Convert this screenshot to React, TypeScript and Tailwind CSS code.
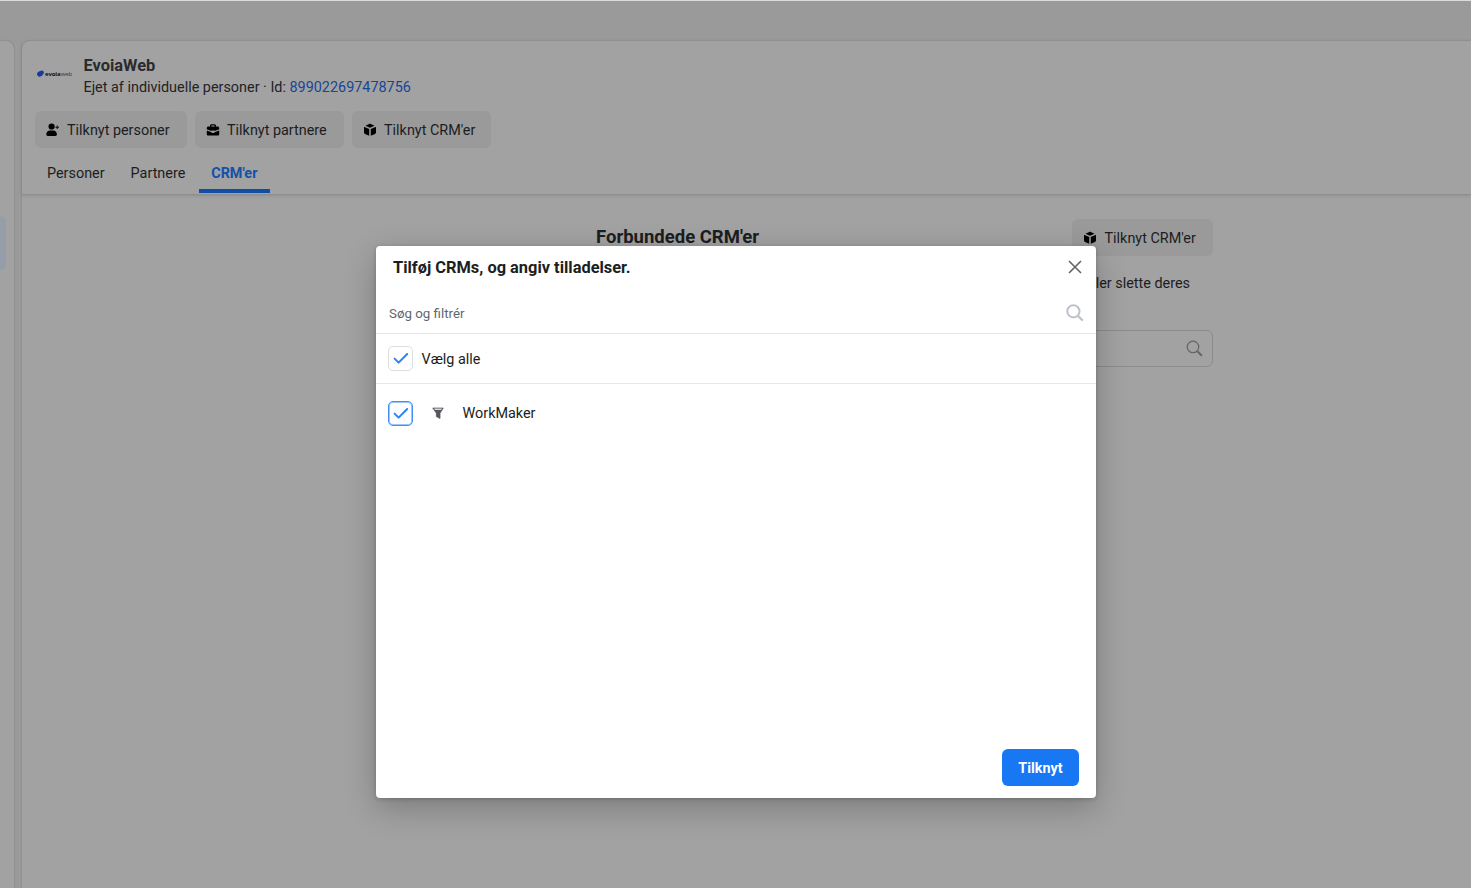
import { ReactNode } from "react";

type IconProps = { className?: string };

function UserPlusIcon() {
  return (
    <svg className="w-[14px] h-[14px]" viewBox="0 0 14 14" fill="currentColor">
      <circle cx="5.6" cy="3.5" r="3.1" />
      <path d="M0.3 11.3C0.3 8.9 2 7.4 4 7.4h3.2c2 0 3.7 1.5 3.7 3.9 0 1-.5 1.6-1.5 1.6H1.8c-1 0-1.5-.6-1.5-1.6z" />
      <path d="M10.6 2.6h1.2v1.1h1.1v1.2h-1.1V6h-1.2V4.9H9.5V3.7h1.1z" opacity=".8" />
    </svg>
  );
}

function BriefcaseIcon() {
  return (
    <svg className="w-[14px] h-[14px]" viewBox="0 0 14 14" fill="currentColor">
      <path
        fillRule="evenodd"
        d="M4 3.4V2.9c0-1 .6-1.6 1.6-1.6h2.8c1 0 1.6.6 1.6 1.6v.5h1.5c1.1 0 1.7.6 1.7 1.6v1.2L8.6 8.1V7.4H5.4v.7L.8 6.2V5c0-1 .6-1.6 1.7-1.6zm1.2 0h3.6V3c0-.4-.2-.6-.6-.6H5.8c-.4 0-.6.2-.6.6z"
      />
      <path d="M.8 7.4 5.4 9.2c.2.6.7.9 1.6.9s1.4-.3 1.6-.9l4.6-1.8V11c0 1-.5 1.5-1.5 1.5H2.3c-1 0-1.5-.5-1.5-1.5z" />
    </svg>
  );
}

function CubeIcon() {
  return (
    <svg className="w-[14px] h-[14px]" viewBox="0 0 14 14" fill="currentColor">
      <path d="M6.2 1c.6-.2 1-.2 1.6 0l3.7 1.7L7 4.7 2.5 2.7z" />
      <path d="M1.5 4l4.7 2v6.7L2 10.9c-.7-.3-1-.7-1-1.4V4.4c0-.3.2-.5.5-.4z" />
      <path d="M12.5 4L7.8 6v6.7l4.2-1.8c.7-.3 1-.7 1-1.4V4.4c0-.3-.2-.5-.5-.4z" />
    </svg>
  );
}

function SearchIcon({ className }: IconProps) {
  return (
    <svg className={className} viewBox="0 0 18 18" fill="none" stroke="currentColor">
      <circle cx="7.4" cy="7.3" r="6.1" />
      <path d="M12 12l4.8 4.6" strokeWidth="2.2" />
    </svg>
  );
}

function CloseIcon() {
  return (
    <svg className="w-[14px] h-[14px] text-[#606467]" viewBox="0 0 14 14" fill="none" stroke="currentColor" strokeWidth="1.6">
      <path d="M1 1l12 12M13 1L1 13" />
    </svg>
  );
}

function FunnelIcon() {
  return (
    <svg className="w-3 h-3" viewBox="0 0 12 12">
      <path d="M.8 1.1h10.4L8 6.2v5.2L4.4 9.6V6.2z" fill="#55585d" stroke="#55585d" strokeWidth=".8" strokeLinejoin="round" />
      <path d="M2 1.6h8L9.1 3H2.9z" fill="#d5d7da" />
    </svg>
  );
}

function Checkbox({ focused = false }: { focused?: boolean }) {
  return (
    <span
      className={`flex h-[25px] w-[25px] shrink-0 items-center justify-center rounded-[5px] border bg-white text-[#2d82f7] ${
        focused ? "border-[#458ff5] shadow-[inset_0_0_0_1px_#9cc4fb]" : "border-[#dcdee1]"
      }`}
    >
      <svg className="h-[13px] w-4" viewBox="0 0 16 13" fill="none" stroke="currentColor" strokeWidth="2" strokeLinecap="round" strokeLinejoin="round">
        <path d="M1.6 6.6l4 4L14.2 2" />
      </svg>
    </span>
  );
}

function ActionButton({ icon, label, className = "" }: { icon: ReactNode; label: string; className?: string }) {
  return (
    <button className={`flex h-[37px] items-center gap-[7.5px] rounded-[6px] bg-[#9a9a9a] pl-[11px] text-black ${className}`}>
      {icon}
      <span className="pt-[2px] text-[14.4px] text-[#1c1d1e]">{label}</span>
    </button>
  );
}

const ACTIONS = [
  { label: "Tilknyt personer", icon: <UserPlusIcon />, width: "w-[152px]" },
  { label: "Tilknyt partnere", icon: <BriefcaseIcon />, width: "w-[149px]" },
  { label: "Tilknyt CRM'er", icon: <CubeIcon />, width: "w-[139px]" },
];

function Logo() {
  return (
    <div className="flex h-9 w-9 items-center gap-px pt-px">
      <svg className="h-[7px] w-[7px] shrink-0" viewBox="0 0 7 7" fill="#183a9c">
        <ellipse cx="3" cy="3.9" rx="3" ry="2.6" transform="rotate(-35 3 3.9)" />
        <circle cx="4.8" cy="2.5" r="2.1" />
      </svg>
      <span className="font-['Open_Sans','Liberation_Sans',sans-serif] text-[6px] leading-none tracking-[-0.1px] text-[#333]">
        <b className="text-[#111]">evoia</b>web
      </span>
    </div>
  );
}

function PageHeader() {
  return (
    <header className="h-[154px] shrink-0 border-b border-[#8f8f8f] shadow-[0_1px_3px_rgba(0,0,0,0.12)]">
      <div className="flex gap-[10.5px] pl-[15px] pt-[14px]">
        <Logo />
        <div>
          <h1 className="text-[16.4px] font-bold leading-[21px] text-[#2a2b2c]">EvoiaWeb</h1>
          <p className="pt-px text-[14.4px] leading-[22px] text-[#222324]">
            Ejet af individuelle personer · Id: <span className="text-[#174597]">899022697478756</span>
          </p>
        </div>
      </div>
      <div className="mt-[12px] flex gap-2 pl-[12.5px]">
        {ACTIONS.map((action) => (
          <ActionButton key={action.label} icon={action.icon} label={action.label} className={action.width} />
        ))}
      </div>
      <nav className="flex h-[45px] text-[14.4px] leading-[51px] text-[#1c1d1e]">
        <span className="ml-[25px]">Personer</span>
        <span className="ml-[26px]">Partnere</span>
        <span className="ml-[13.5px] h-[45px] w-[71px] border-b-4 border-[#0f4ea3] text-center font-bold text-[#1351aa]">
          CRM'er
        </span>
      </nav>
    </header>
  );
}

function ConnectedCrms() {
  return (
    <section className="ml-[574px] w-[617px] pt-[24px] text-[#1c1d1e]">
      <div className="flex items-center justify-between">
        <h2 className="text-[18.5px] font-bold">Forbundede CRM'er</h2>
        <ActionButton icon={<CubeIcon />} label="Tilknyt CRM'er" className="w-[141px]" />
      </div>
      <p className="mt-[17px] pr-[23px] text-right text-[14.4px] leading-[22px]">Se og administrer CRM'er, eller slette deres</p>
      <div className="mt-[35px] flex h-[37px] items-center justify-end rounded-[6px] border border-[#8b8b8b] pr-[9px]">
        <SearchIcon className="h-[17px] w-[17px] stroke-[1.3] text-[#656565]" />
      </div>
    </section>
  );
}

function CrmDialog() {
  return (
    <div
      role="dialog"
      className="absolute left-[376px] top-[245px] flex h-[552px] w-[720px] flex-col rounded-[4px] bg-white shadow-[0_10px_32px_rgba(0,0,0,0.24),0_1px_4px_rgba(0,0,0,0.2)]"
    >
      <div className="flex h-[42px] items-center justify-between pl-[17px] pr-[14px]">
        <h3 className="pt-[2px] text-[16.4px] font-bold text-[#1c1e21]">Tilføj CRMs, og angiv tilladelser.</h3>
        <CloseIcon />
      </div>
      <div className="flex h-[46px] items-center justify-between border-b border-[#e4e6e9] pl-[13px] pr-[12.5px]">
        <span className="pt-[6px] text-[13.3px] text-[#606770]">Søg og filtrér</span>
        <SearchIcon className="mt-1 h-[18px] w-[18px] stroke-[2] text-[#bec3c9]" />
      </div>
      <div className="flex h-[50px] items-center border-b border-[#e4e6e9] pl-3">
        <Checkbox />
        <span className="ml-[8.5px] pt-[2px] text-[14.4px] text-[#1c1e21]">Vælg alle</span>
      </div>
      <div className="flex h-[58px] items-center pl-3">
        <Checkbox focused />
        <span className="ml-[19px]">
          <FunnelIcon />
        </span>
        <span className="ml-[18.5px] pt-px text-[14.4px] text-[#1c1e21]">WorkMaker</span>
      </div>
      <div className="mt-auto flex justify-end pb-3 pr-[17px]">
        <button className="h-[37px] w-[77px] rounded-[6px] bg-[#1877f2] pt-[2px] text-[14.4px] font-bold text-white">Tilknyt</button>
      </div>
    </div>
  );
}

export default function App() {
  return (
    <div className="relative h-[888px] w-[1471px] overflow-hidden border-t border-[#dcdcdc] bg-[#9a9a9a] font-['Roboto','Liberation_Sans',sans-serif]">
      <div className="flex h-full gap-2 pt-10">
        <aside className="w-[14px] shrink-0 rounded-tr-[8px] bg-[#a2a2a2] pt-[175px] shadow-[0_0_2px_rgba(0,0,0,0.2)]">
          <div className="h-[54px] w-[6px] rounded-r-[6px] bg-[#959da8]" />
        </aside>
        <main className="flex min-w-0 flex-1 flex-col rounded-tl-[8px] bg-[#a2a2a2] shadow-[0_0_2px_rgba(0,0,0,0.2)]">
          <PageHeader />
          <ConnectedCrms />
        </main>
      </div>
      <CrmDialog />
    </div>
  );
}
